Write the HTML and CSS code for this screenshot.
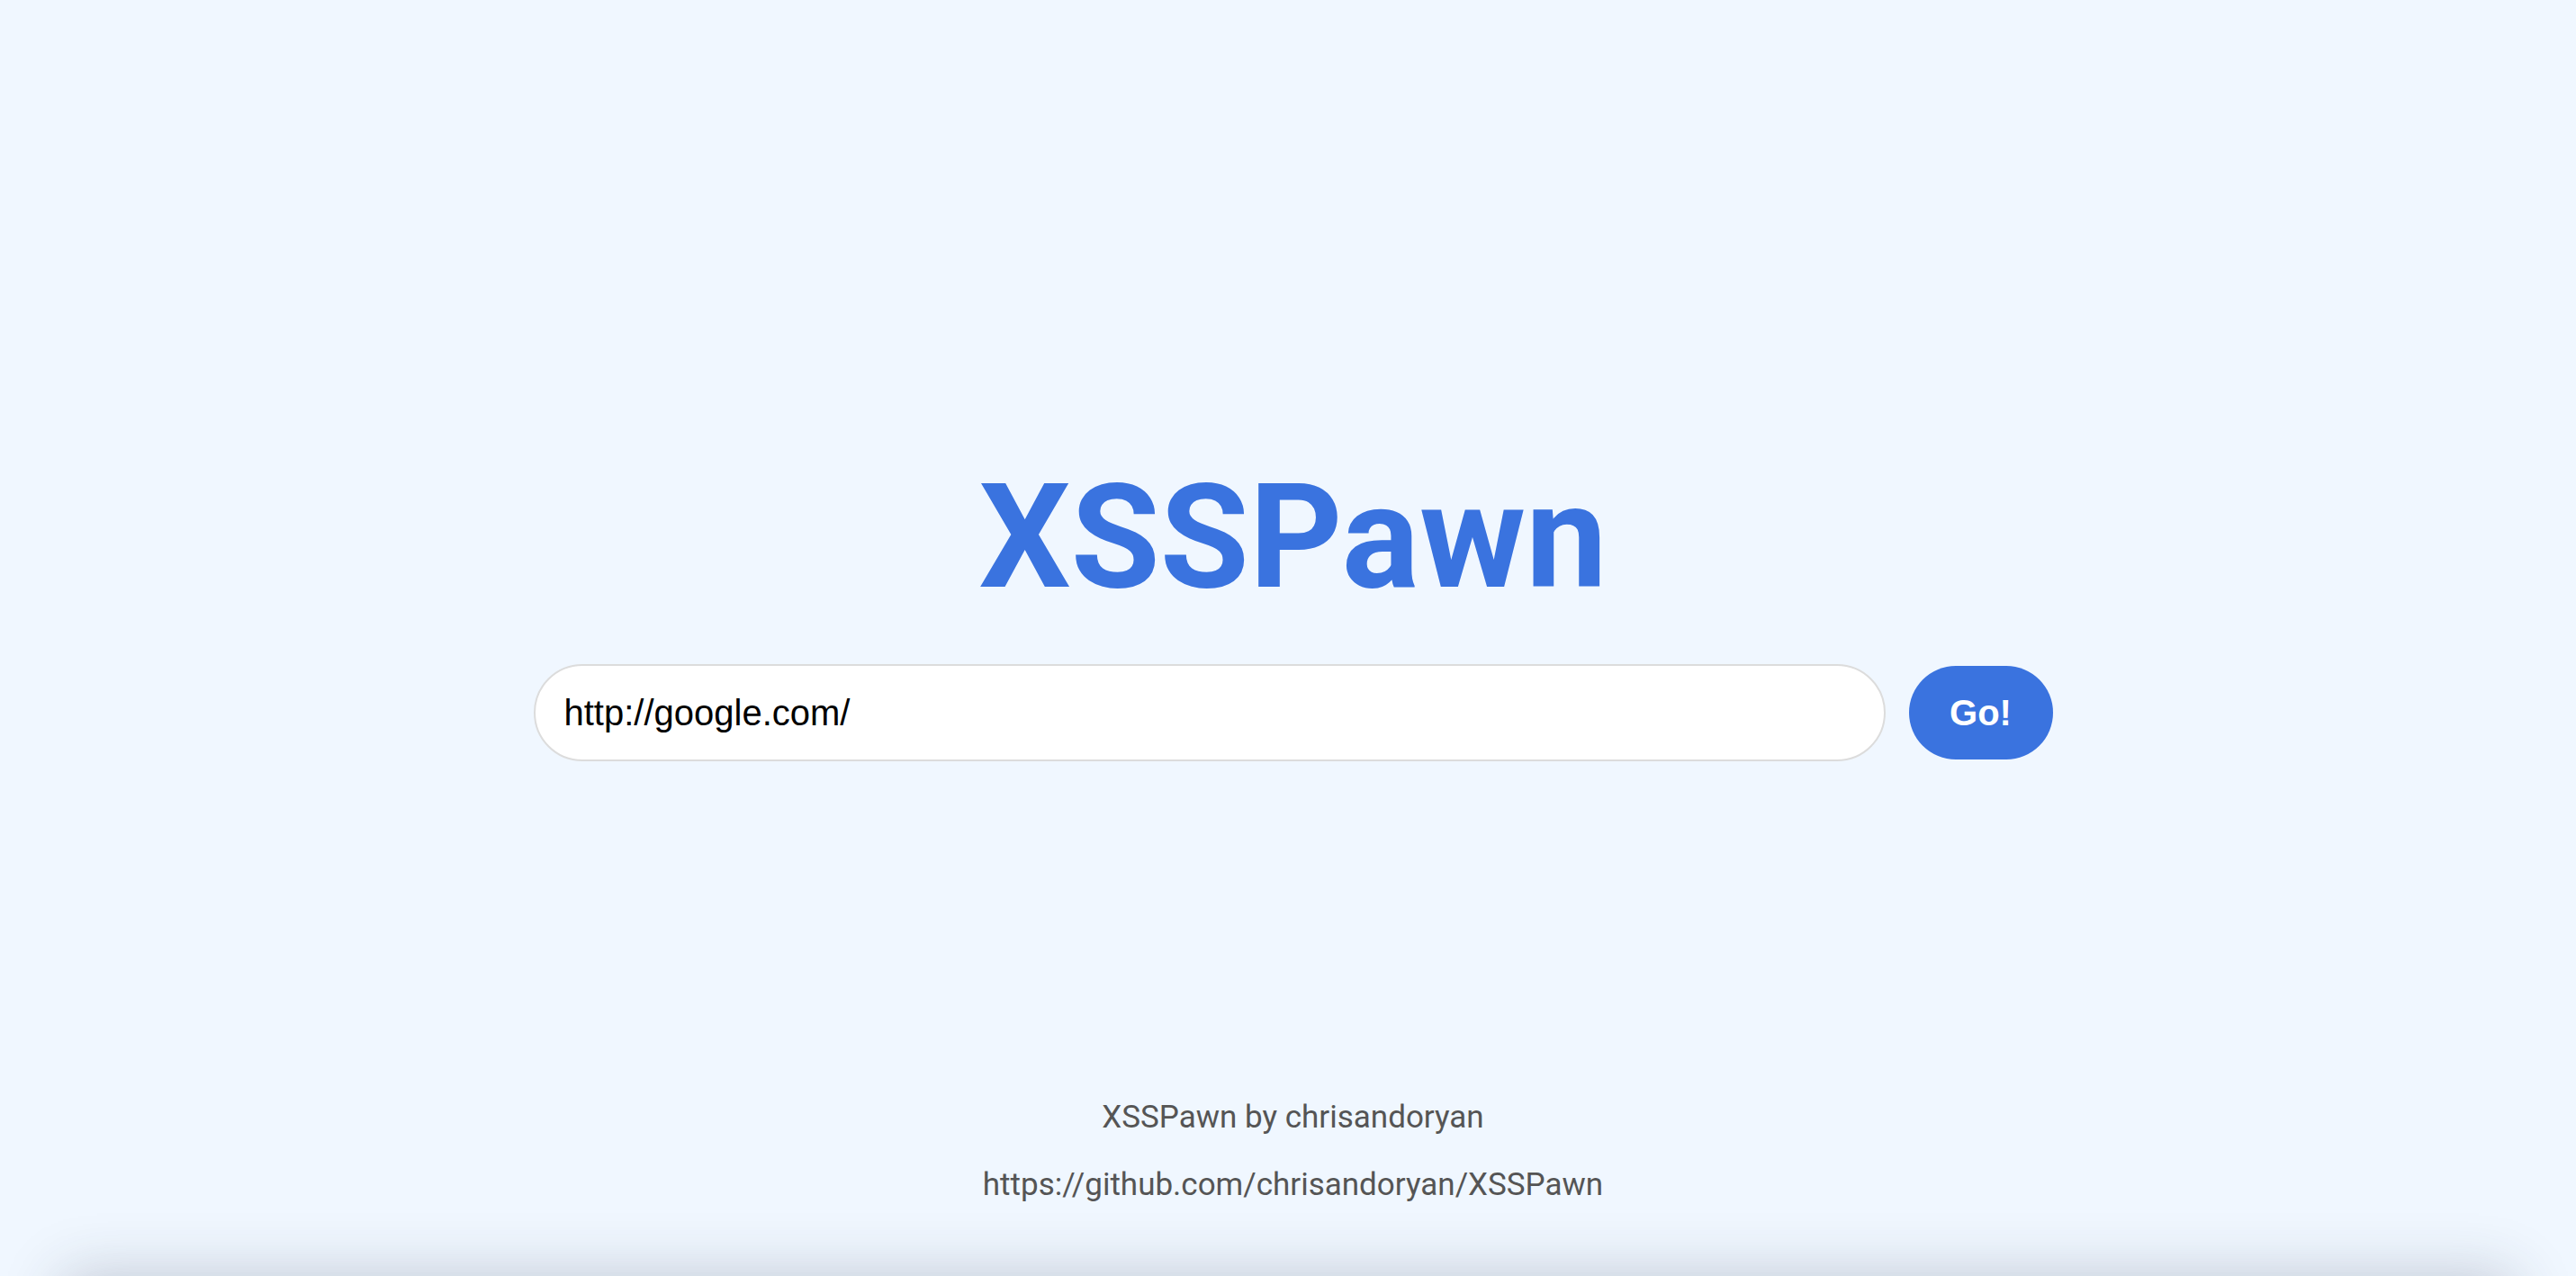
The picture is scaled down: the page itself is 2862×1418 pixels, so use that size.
FILE: index.html
```html
<!DOCTYPE html>
<html lang="en">
<head>
<meta charset="utf-8">
<title>XSSPawn</title>
<link rel="stylesheet" href="styles.css">
</head>
<body>
<div class="page">
  <main class="main">
    <h1 class="title">XSSPawn</h1>
    <form class="search">
      <input class="url" type="text" value="http://google.com/">
      <button class="go" type="button">Go!</button>
    </form>
  </main>
  <footer class="footer">
    <p class="line">XSSPawn by chrisandoryan</p>
    <p class="line">https://github.com/chrisandoryan/XSSPawn</p>
  </footer>
</div>
<div class="panel"></div>
</body>
</html>
```
FILE: styles.css
```css
html, body {
  margin: 0;
  padding: 0;
}
body {
  background: #f0f7ff;
  font-family: Roboto, "Liberation Sans", sans-serif;
  overflow: hidden;
}
.page {
  box-sizing: border-box;
  height: 1418px;
  padding-left: 11px;
  display: flex;
  flex-direction: column;
}
.main {
  display: flex;
  flex-direction: column;
  align-items: center;
  padding-top: 517px;
}
.title {
  margin: 0;
  font-family: Roboto, sans-serif;
  font-weight: 700;
  font-size: 161px;
  line-height: 1;
  color: #3a73df;
}
.search {
  margin-top: 60px;
  display: flex;
  align-items: center;
  gap: 26px;
}
.url {
  box-sizing: border-box;
  width: 1502px;
  height: 108px;
  border: 2px solid #dcdcdc;
  border-radius: 54px;
  background: #fff;
  padding: 0 32px;
  font-family: "Liberation Sans", Arial, sans-serif;
  font-size: 40px;
  color: #000;
  outline: none;
}
.go {
  box-sizing: border-box;
  width: 160px;
  height: 104px;
  border: none;
  border-radius: 52px;
  background: #3a73df;
  color: #fff;
  font-family: "Liberation Sans", Arial, sans-serif;
  font-weight: 700;
  font-size: 40px;
}
.footer {
  margin-top: auto;
  padding-bottom: 64px;
  text-align: center;
  color: #555;
}
.line {
  margin: 0;
  font-size: 35px;
  line-height: 75px;
}
.panel {
  margin: 0 70px;
  height: 200px;
  background: #f0f7ff;
  box-shadow: 0 0 64px rgba(40, 50, 70, 0.24);
}
```
